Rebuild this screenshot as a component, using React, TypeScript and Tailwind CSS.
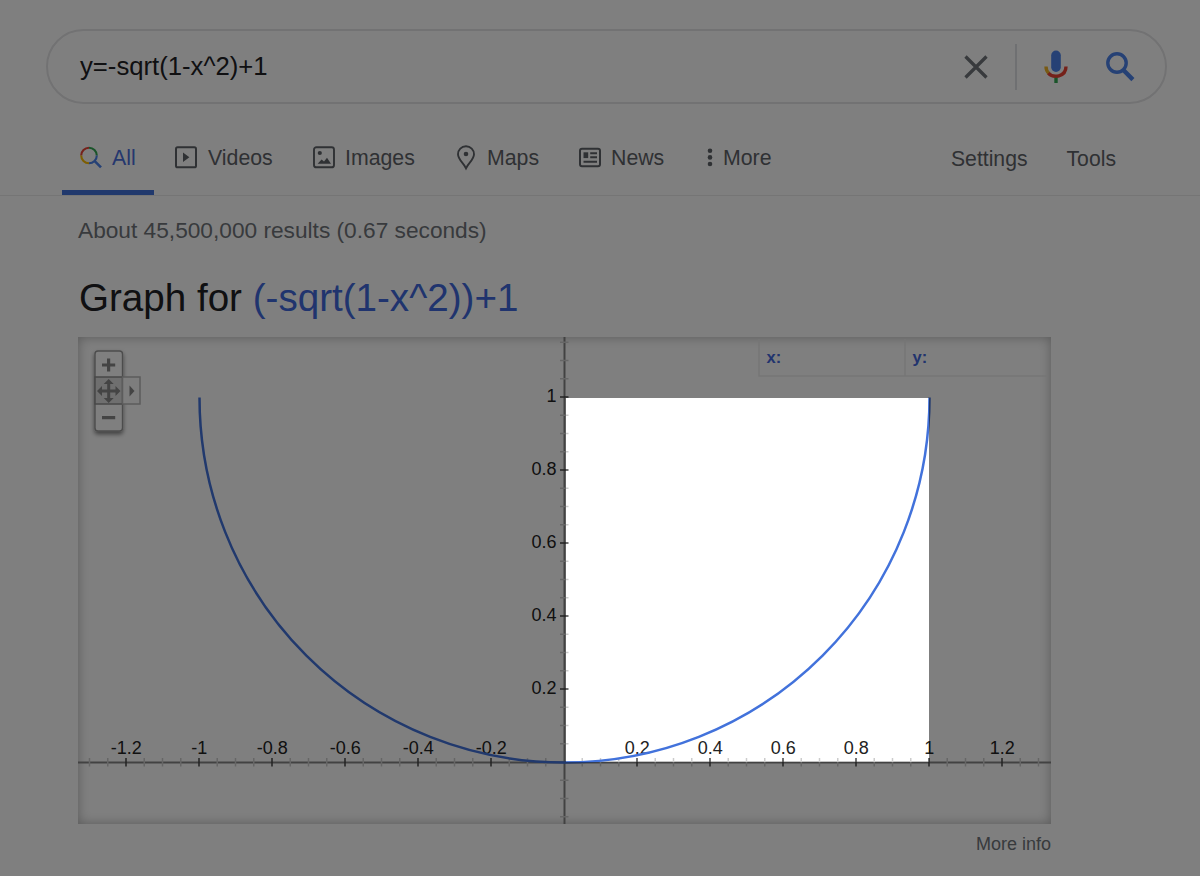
import React from 'react';

// Graph geometry, in pixels of the plot area
const ORIGIN = { x: 486.5, y: 425.5 };
const UNIT = 365;

const TabIcon = ({ name }: { name: string }) => {
  switch (name) {
    case 'All':
      return (
        <svg width="24" height="24" viewBox="0 0 24 24" fill="none" strokeWidth="2.100">
          <path d="M2.200 9.500a7.800 7.800 0 0 1 7.800-7.800" stroke="#ea4335" />
          <path d="M10 1.700a7.800 7.800 0 0 1 7.800 7.800" stroke="#34a853" />
          <path d="M2.200 9.500a7.800 7.800 0 0 0 7.800 7.800" stroke="#fbbc05" />
          <path d="M17.800 9.500a7.800 7.800 0 0 1-7.800 7.800" stroke="#4c83ea" />
          <path d="M15.200 14.600l6.800 6.800" stroke="#4c83ea" strokeWidth="2.600" />
        </svg>
      );
    case 'Videos':
      return (
        <svg width="24" height="24" viewBox="0 0 24 24" fill="none">
          <rect x="2" y="1.300" width="20" height="20" rx="1.600" stroke="currentColor" strokeWidth="2" />
          <path d="M9 6.500v9.600l6.400-4.800z" fill="currentColor" />
        </svg>
      );
    case 'Images':
      return (
        <svg width="24" height="24" viewBox="0 0 24 24" fill="none">
          <rect x="2" y="1.300" width="20" height="20" rx="2.400" stroke="currentColor" strokeWidth="1.900" />
          <circle cx="7.800" cy="7" r="2.100" fill="currentColor" />
          <path d="M5.600 17.800l4-4.400 2.400 2 3-3.600 4 6z" fill="currentColor" />
        </svg>
      );
    case 'Maps':
      return (
        <svg width="24" height="26" viewBox="0 0 24 26" fill="none">
          <path
            d="M12 1.300c-4.600 0-8 3.500-8 8 0 5.200 5.600 8.800 8 14 2.400-5.200 8-8.800 8-14 0-4.500-3.400-8-8-8z"
            stroke="currentColor"
            strokeWidth="1.900"
          />
          <circle cx="12" cy="9" r="2.300" fill="currentColor" />
        </svg>
      );
    case 'News':
      return (
        <svg width="24" height="24" viewBox="0 0 24 24" fill="none" stroke="currentColor">
          <rect x="2" y="2.700" width="20" height="17.600" rx="2" strokeWidth="2" />
          <path d="M5.500 9.200h4.700" strokeWidth="5.800" />
          <path d="M12.200 7.300h6.800M12.200 11.300h6.800M5.500 15.800h13.500" strokeWidth="2" />
        </svg>
      );
    default:
      return (
        <svg width="6" height="20" viewBox="0 0 6 20" fill="currentColor">
          <circle cx="3" cy="2.800" r="2.300" />
          <circle cx="3" cy="9.400" r="2.300" />
          <circle cx="3" cy="16" r="2.300" />
        </svg>
      );
  }
};

const tabs = [
  { label: 'All', className: 'w-[92px] ml-[62px] pl-[17px] gap-[9px] pt-[5px] text-[#4a6fdc] border-b-[5px] border-[#4272db]' },
  { label: 'Videos', className: 'w-[138px] pl-[20px] gap-[10px]' },
  { label: 'Images', className: 'w-[142px] pl-[20px] gap-[9px]' },
  { label: 'Maps', className: 'w-[124px] pl-[20px] gap-[9px]' },
  { label: 'News', className: 'w-[128px] pl-[20px] gap-[9px]' },
  { label: 'More', className: 'w-[120px] pl-[21px] gap-[10px]' },
];

const SearchBar = () => (
  <div className="ml-[46px] mt-[29px] flex h-[75px] w-[1121px] items-center rounded-full border-2 border-[#e4e4e6] pl-8">
    <div className="flex-1 pb-[1px] text-[25.700px] text-[#202124]">y=-sqrt(1-x^2)+1</div>
    <svg width="24" height="24" viewBox="0 0 24 24" className="text-[#70757a]">
      <path d="M1.500 1.500l21 21M22.500 1.500l-21 21" stroke="currentColor" strokeWidth="3.300" />
    </svg>
    <div className="ml-[27px] mr-[26px] h-[46px] w-[2px] bg-[#dfe1e5]" />
    <svg width="26" height="34" viewBox="0 0 26 34" fill="none">
      <rect x="8.200" y="0.500" width="9.600" height="21.500" rx="4.800" fill="#4c83ea" />
      <path d="M3 16.500c0 3 1.200 5.400 3 7.100" stroke="#f0b429" strokeWidth="3.400" />
      <path d="M5.400 23.100c4.600 5.400 17.600 4 17.600-6.600" stroke="#ea4335" strokeWidth="3.400" />
      <path d="M13 27.800v5.200" stroke="#34a853" strokeWidth="3.400" />
    </svg>
    <svg width="30" height="30" viewBox="0 0 30 30" fill="none" className="ml-[36px] mr-[30px]">
      <circle cx="12" cy="11" r="9.200" stroke="#4c83ea" strokeWidth="3.400" />
      <path d="M18.600 18.300l9.300 9.300" stroke="#4c83ea" strokeWidth="4.400" />
    </svg>
  </div>
);

const NavTabs = () => (
  <nav className="mt-[17px] flex h-[75px] border-b-[1.500px] border-[#ebebeb] text-[21.300px] text-[#5f6368]">
    {tabs.map((tab) => (
      <div key={tab.label} className={`flex h-[74px] shrink-0 items-center ${tab.className}`}>
        <TabIcon name={tab.label} />
        <span className="pt-[2px]">{tab.label}</span>
      </div>
    ))}
    <div className="ml-auto mr-[84px] flex h-[74px] items-center gap-[39px] pt-[2px] text-[21.200px]">
      <span>Settings</span>
      <span>Tools</span>
    </div>
  </nav>
);

const ZoomControls = () => (
  <svg x="12" y="9" width="56" height="96" viewBox="0 0 56 96" fill="none">
    <defs>
      <filter id="lift" x="-20%" y="-20%" width="140%" height="140%">
        <feDropShadow dx="0" dy="2.500" stdDeviation="2" floodOpacity="0.500" />
      </filter>
    </defs>
    <rect x="5" y="5" width="27.500" height="80" rx="3" fill="#fff" stroke="#999" strokeWidth="1.400" filter="url(#lift)" />
    <rect x="5" y="31" width="27.500" height="27" fill="#dedede" stroke="#909090" strokeWidth="1.500" />
    <rect x="32.500" y="31" width="17.500" height="27" fill="#fafafa" stroke="#b8b8b8" strokeWidth="1.500" />
    <path d="M12 19h13.200M18.600 12.400v13.200M12 71.700h13.200" stroke="#888" strokeWidth="3.200" />
    <path d="M10 45h18M18.700 36v18" stroke="#888" strokeWidth="3" />
    <path d="M18.700 33l5 5h-10zM18.700 57l5-5h-10zM7 45l5-5v10zM30.500 45l-5-5v10z" fill="#888" />
    <path d="M39.500 39.500l5 5.500-5 5.500z" fill="#888" />
  </svg>
);

const Graph = () => {
  const xTicks = Array.from({ length: 53 }, (_, i) => i - 26);
  const yTicks = Array.from({ length: 27 }, (_, i) => i - 3);

  return (
    <svg width="973" height="487" viewBox="0 0 973 487" fill="none">
      <path d="M681 2V39H970M827 2V39" stroke="#ebebeb" strokeWidth="1.500" />
      <g className="text-[16.500px] font-bold" fill="#4468dc">
        <text x="688.500" y="26">x:</text>
        <text x="834.500" y="26">y:</text>
      </g>

      {/* Axes and ticks */}
      <path d={`M0 ${ORIGIN.y}H973M${ORIGIN.x} 0V487`} stroke="#858585" strokeWidth="2" />
      {xTicks.map((i) => {
        const x = ORIGIN.x + (i * UNIT) / 20 - 0.5;
        return i !== 0 && (
          <path
            key={i}
            d={`M${x} ${ORIGIN.y - 4.5}v8.500`}
            stroke={i % 4 === 0 ? '#444' : '#ccc'}
            strokeWidth="1.500"
          />
        );
      })}
      {yTicks.map((i) => {
        const y = ORIGIN.y - (i * UNIT) / 20 - 0.5;
        return i !== 0 && (
          <path
            key={i}
            d={`M${ORIGIN.x - 4.5} ${y}h8.500`}
            stroke={i % 4 === 0 ? '#444' : '#ccc'}
            strokeWidth="1.500"
          />
        );
      })}

      {/* Labels */}
      <g className="text-[18px]" fill="#222">
        {[-1.2, -1, -0.8, -0.6, -0.4, -0.2, 0.2, 0.4, 0.6, 0.8, 1, 1.2].map((v) => (
          <text key={v} x={ORIGIN.x + v * UNIT - 0.3} y="417" textAnchor="middle">{v}</text>
        ))}
        {[0.2, 0.4, 0.6, 0.8, 1].map((v) => (
          <text key={v} x="478.500" y={ORIGIN.y - v * UNIT + 4.5} textAnchor="end">{v}</text>
        ))}
      </g>

      {/* Lower half of the unit circle */}
      <path
        d={`M${ORIGIN.x - UNIT} ${ORIGIN.y - UNIT}a${UNIT} ${UNIT} 0 0 0 ${UNIT * 2} 0`}
        stroke="#4272db"
        strokeWidth="2.500"
      />
      <ZoomControls />
    </svg>
  );
};

const App = () => {
  return (
    <div className="relative h-[876px] w-[1200px] overflow-hidden bg-white font-['Liberation_Sans',Arial,sans-serif]">
      <div className="flex flex-col">
        <SearchBar />
        <NavTabs />
        <main className="ml-[78px] w-[973px]">
          <p className="mt-[19px] h-[30px] text-[22.700px] leading-[30px] text-[#70757a]">
            About 45,500,000 results (0.67 seconds)
          </p>
          <h1 className="mt-[29px] h-[48px] pl-[1px] text-[38.600px] leading-[48px] text-[#202124]">
            Graph for <span className="text-[#4068dc]">(-sqrt(1-x^2))+1</span>
          </h1>
          <div className="mt-[15px] h-[487px] shadow-[inset_0_0_12px_rgba(0,0,0,0.3)]">
            <Graph />
          </div>
          <div className="mt-[8px] text-right text-[18px] leading-[24px] text-[#70757a]">More info</div>
        </main>
      </div>

      {/* Dimmed backdrop with the unit square left clear */}
      <div className="pointer-events-none absolute left-[566px] top-[398px] h-[364px] w-[363px] shadow-[0_0_0_1300px_rgba(0,0,0,0.5)]" />
    </div>
  );
};

export default App;
